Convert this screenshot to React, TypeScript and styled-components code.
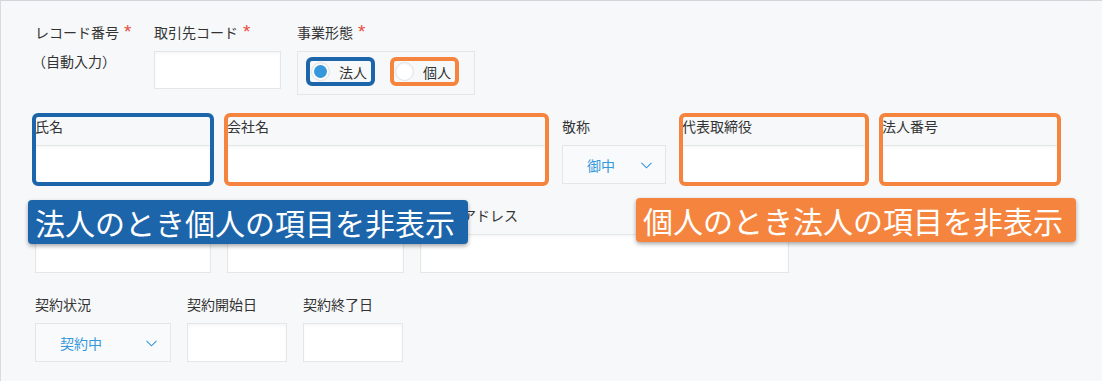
import React from 'react';
import styled, { createGlobalStyle, css } from 'styled-components';

const BLUE = '#1d65ab';
const ORANGE = '#f5853e';
const ACCENT = '#3498db';
const LINE = '#e3e7e8';

type Mark = 'blue' | 'orange';
const markColor = (m: Mark) => (m === 'blue' ? BLUE : ORANGE);

const GlobalStyle = createGlobalStyle`
  html, body {
    margin: 0;
    padding: 0;
    background: #f7f8fa;
  }
  body {
    font-family: "Noto Sans CJK JP", "Noto Sans", sans-serif;
    color: #333;
  }
`;

function Chevron() {
  return (
    <svg width="11" height="7" viewBox="0 0 11 7" fill="none">
      <polyline points="0.5,0.8 5.5,5.8 10.5,0.8" stroke={ACCENT} strokeWidth="1.1" />
    </svg>
  );
}

function App() {
  return (
    <>
      <GlobalStyle />
      <Page>
        <Row>
          <Field $w={103}>
            <Label>レコード番号<Required>*</Required></Label>
            <AutoText>（自動入力）</AutoText>
          </Field>
          <Field $w={127}>
            <Label>取引先コード<Required>*</Required></Label>
            <TextInput $h={38} readOnly />
          </Field>
          <Field $w={178}>
            <Label>事業形態<Required>*</Required></Label>
            <RadioGroup>
              <RadioOption $mark="blue">
                <RadioDot $checked />
                法人
              </RadioOption>
              <RadioOption $mark="orange">
                <RadioDot />
                個人
              </RadioOption>
            </RadioGroup>
          </Field>
        </Row>

        <Row>
          <Field $w={176} $mark="blue">
            <Label>氏名</Label>
            <TextInput $h={38} readOnly />
          </Field>
          <Field $w={319} $mark="orange">
            <Label>会社名</Label>
            <TextInput $h={38} readOnly />
          </Field>
          <Field $w={104}>
            <Label>敬称</Label>
            <SelectBox>
              御中
              <Chevron />
            </SelectBox>
          </Field>
          <Field $w={184} $mark="orange">
            <Label>代表取締役</Label>
            <TextInput $h={38} readOnly />
          </Field>
          <Field $w={176} $mark="orange">
            <Label>法人番号</Label>
            <TextInput $h={38} readOnly />
          </Field>
        </Row>

        {/* the first two labels of this row sit under the blue note */}
        <Row>
          <Field $w={176}>
            <Label />
            <TextInput readOnly />
          </Field>
          <Field $w={177}>
            <Label />
            <TextInput readOnly />
          </Field>
          <Field $w={369}>
            <Label>メールアドレス</Label>
            <TextInput readOnly />
          </Field>
        </Row>

        <Row>
          <Field $w={136}>
            <Label>契約状況</Label>
            <SelectBox>
              契約中
              <Chevron />
            </SelectBox>
          </Field>
          <Field $w={100}>
            <Label>契約開始日</Label>
            <TextInput readOnly />
          </Field>
          <Field $w={100}>
            <Label>契約終了日</Label>
            <TextInput readOnly />
          </Field>
        </Row>

        <Callout $color={BLUE} $left={27} $top={199}>
          法人のとき個人の項目を非表示
        </Callout>
        <Callout $color={ORANGE} $left={635} $top={197}>
          個人のとき法人の項目を非表示
        </Callout>
      </Page>
    </>
  );
}

const Page = styled.div`
  position: relative;
  box-sizing: border-box;
  width: 1102px;
  height: 381px;
  border-top: 1px solid #d3d6d9;
  border-left: 1px solid #d9dbde;
  background: #f7f8fa;
  padding: 21px 0 0 34px;
  display: flex;
  flex-direction: column;
  gap: 21px;
  overflow: hidden;
`;

const Row = styled.div`
  display: flex;
  align-items: flex-start;
  gap: 16px;
`;

const Field = styled.div<{ $w: number; $mark?: Mark }>`
  width: ${p => p.$w}px;
  display: flex;
  flex-direction: column;
  border-radius: 3px;
  ${p => p.$mark && css`
    outline: 4px solid ${markColor(p.$mark)};
    outline-offset: -1px;
  `}
`;

const Label = styled.div`
  height: 20px;
  line-height: 20px;
  margin-bottom: 9px;
  font-size: 14px;
  color: #333;
  white-space: nowrap;
`;

const Required = styled.span`
  margin-left: 5px;
  color: #e74c3c;
  font-family: "Liberation Sans", Arial, sans-serif;
  font-size: 19px;
`;

const AutoText = styled.div`
  height: 20px;
  line-height: 20px;
  margin-left: -3px;
  font-size: 14px;
  color: #333;
  white-space: nowrap;
`;

const TextInput = styled.input<{ $h?: number }>`
  display: block;
  width: 100%;
  height: ${p => p.$h ?? 39}px;
  box-sizing: border-box;
  margin: 0;
  padding: 0 8px;
  border: 1px solid ${LINE};
  border-radius: 0;
  background: #fff;
  box-shadow: inset 0 2px 3px rgba(0, 0, 0, 0.035);
  outline: none;
`;

const SelectBox = styled.div`
  height: 39px;
  box-sizing: border-box;
  display: flex;
  align-items: center;
  justify-content: space-between;
  padding: 1px 13px 0 24px;
  border: 1px solid ${LINE};
  background: #f9fafb;
  color: ${ACCENT};
  font-size: 14px;
`;

const RadioGroup = styled.div`
  height: 44px;
  box-sizing: border-box;
  display: flex;
  align-items: flex-start;
  gap: 21px;
  padding: 8px 11px 0;
  border: 1px solid ${LINE};
`;

const RadioOption = styled.label<{ $mark?: Mark }>`
  height: 23px;
  display: flex;
  align-items: center;
  gap: 9px;
  padding: 0 5px 0 2px;
  border-radius: 3px;
  font-size: 14px;
  color: #333;
  ${p => p.$mark && css`
    outline: 4px solid ${markColor(p.$mark)};
    outline-offset: -1px;
  `}
`;

const RadioDot = styled.span<{ $checked?: boolean }>`
  width: 19px;
  height: 19px;
  box-sizing: border-box;
  display: flex;
  align-items: center;
  justify-content: center;
  border: 1px solid #dfe3e6;
  border-radius: 50%;
  background: #fff;
  box-shadow: inset 0 1px 2px rgba(0, 0, 0, 0.06);
  &::after {
    content: '';
    width: 13px;
    height: 13px;
    border-radius: 50%;
    background: ${p => (p.$checked ? ACCENT : 'transparent')};
  }
`;

const Callout = styled.div<{ $color: string; $left: number; $top: number }>`
  position: absolute;
  left: ${p => p.$left}px;
  top: ${p => p.$top}px;
  height: 44px;
  line-height: 44px;
  padding: 0 13px 0 7px;
  border-radius: 4px;
  background: ${p => p.$color};
  color: #fff;
  font-size: 30px;
  white-space: nowrap;
  box-shadow: 0 2px 4px rgba(0, 0, 0, 0.35);
`;

export default App;
